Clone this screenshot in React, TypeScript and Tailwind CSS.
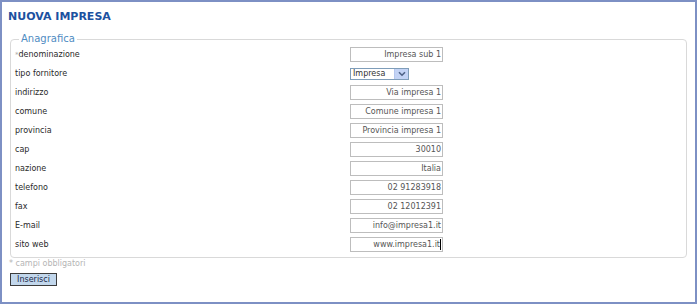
import React from 'react';

const rows: { label: string; value?: string; required?: boolean; select?: boolean; caret?: boolean }[] = [
  { label: 'denominazione', value: 'Impresa sub 1', required: true },
  { label: 'tipo fornitore', select: true },
  { label: 'indirizzo', value: 'Via impresa 1' },
  { label: 'comune', value: 'Comune impresa 1' },
  { label: 'provincia', value: 'Provincia impresa 1' },
  { label: 'cap', value: '30010' },
  { label: 'nazione', value: 'Italia' },
  { label: 'telefono', value: '02 91283918' },
  { label: 'fax', value: '02 12012391' },
  { label: 'E-mail', value: 'info@impresa1.it' },
  { label: 'sito web', value: 'www.impresa1.it', caret: true },
];

const SelectBox = () => (
  <div className="flex items-center w-[59px] h-[12px] border border-[#7f9db9] bg-white">
    <span className="flex-1 pl-[2px] text-[8px] leading-[10px] text-[#333]">Impresa</span>
    <span className="w-[14px] h-[10px] bg-[#c3d3f5] border-l border-[#b5c7ee] flex items-center justify-center">
      <svg width="8" height="6" viewBox="0 0 8 6">
        <path d="M1 1.2 L4 4.2 L7 1.2" fill="none" stroke="#4d6185" strokeWidth="1.6" />
      </svg>
    </span>
  </div>
);

export default function App() {
  return (
    <div className="w-[697px] h-[304px] border-2 border-[#7d90c4] bg-white font-['DejaVu_Sans',sans-serif] overflow-hidden">
      <h1 className="mt-[8px] ml-[6px] text-[11px] leading-[14px] font-bold text-[#1c519f]">NUOVA IMPRESA</h1>
      <fieldset className="mt-[9px] ml-[8px] w-[677px] border border-[#d9d9d9] rounded-[4px] pl-[4px] pr-[4px] pb-[3px]">
        <legend className="ml-[4px] px-[2px] text-[10px] leading-[12px] text-[#4f8cc2]">Anagrafica</legend>
        {rows.map((r) => (
          <div key={r.label} className="flex items-center h-[19px] first:h-[18px]">
            <div className="w-[335px] text-[8px] leading-[10px] text-[#2a2a2a]">
              {r.required && <span className="text-[#aaa] text-[7px]">*</span>}
              {r.label}
            </div>
            {r.select ? (
              <SelectBox />
            ) : (
              <div className="w-[93px] h-[15px] border border-[#bdbdbd] bg-white flex items-center justify-end pr-[1px] text-[8px] leading-[10px] text-[#555]">
                {r.value}
                {r.caret && <span className="w-[1px] h-[11px] bg-black" />}
              </div>
            )}
          </div>
        ))}
      </fieldset>
      <div className="ml-[7px] mt-[1px] text-[8px] leading-[10px] text-[#b5b5b5]">* campi obbligatori</div>
      <button className="ml-[8px] mt-[4px] w-[47px] h-[13px] bg-[#c2d7ec] border border-[#3c3c3c] text-[8px] leading-[10px] text-[#1c2a4a] flex items-center justify-center">
        Inserisci
      </button>
    </div>
  );
}
